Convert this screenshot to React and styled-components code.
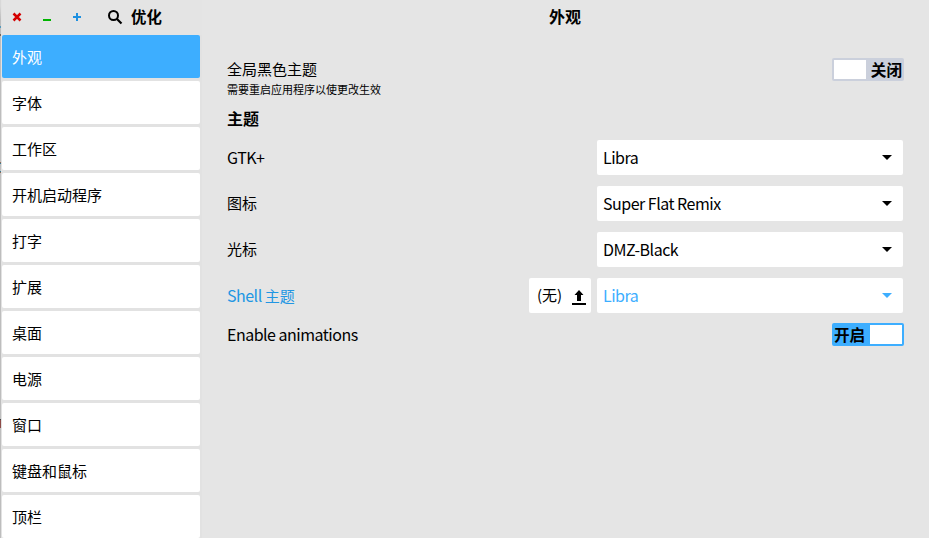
import React from "react";
import styled, { createGlobalStyle } from "styled-components";

const Global = createGlobalStyle`
  * { box-sizing: border-box; }
  body { margin: 0; background: #e5e5e5; }
  button { font: inherit; color: inherit; border: 0; padding: 0; margin: 0; background: none; }
`;
const Window = styled.div`
  width: 929px; height: 538px; overflow: hidden; display: grid;
  grid-template-columns: 1px 201px 1fr; background: #e5e5e5; color: #000;
  font: 16px/24px "Noto Sans CJK SC", sans-serif;
`;
const Edge = styled.div`
  background: linear-gradient(#d8d8d8 0 6px, #bdbdbd 20px 26px, #5599bb 26px 28px, #bdbdbd 28px 34px,
    #75665c 34px 36px, #bdbdbd 36px 162px, #93684f 162px 163px, #347b98 163px 164px, #bdbdbd 164px 171px,
    #347b98 171px 172px, #93684f 172px 173px, #bdbdbd 173px 419px, #444 419px 420px, #8d4b48 420px 428px, #bdbdbd 428px);
`;
const Sidebar = styled.aside`
  background: #e2e2e2; padding-left: 1px; overflow: hidden;
`;
const SideHeader = styled.header`
  height: 35px; display: flex; align-items: flex-start; background: #e4e4e4;
`;
const WindowButton = styled.button`
  width: 30px; height: 34px; display: flex; align-items: center; justify-content: center; color: ${p => p.$color};
`;
const SearchButton = styled.button`
  display: flex; margin: 10px 0 0 16px;
`;
const Title = styled.h1`
  margin: 0; font-size: 16px; font-weight: 700; line-height: 32px;
`;
const SideTitle = styled(Title)`margin-left: 7px; font-size: 15.4px;`;
const Nav = styled.nav`
  display: flex; flex-direction: column; gap: 3px; width: 198px;
`;
const NavItem = styled.button`
  height: 43px; flex: none; border-radius: 2px; text-align: left; padding: 0 0 0 10px; font-size: 15px;
  background: ${p => p.$active ? "#3daeff" : "#fff"}; color: ${p => p.$active ? "#fff" : "#000"};
`;
const Main = styled.main`background: #e5e5e5;`;
const MainHeader = styled.header`
  height: 35px; padding-right: 1px; text-align: center;
`;
const Settings = styled.section`
  padding: 23px 26px 0 25px;
`;
const Row = styled.div`
  display: flex; align-items: ${p => p.$top ? "flex-start" : "center"}; justify-content: space-between;
  height: ${p => p.$height}px; color: ${p => p.$blue ? "#2196e3" : "#000"};
`;
const Label = styled.div`font-size: 15px;`;
const TopLabel = styled(Label)`line-height: 22px;`;
const Latin = styled.span`font-size: 16px; letter-spacing: -0.5px;`;
const Hint = styled.div`font-size: 11px; line-height: 18px;`;
const Heading = styled.h2`margin: 0; font-size: 16px; line-height: 22px; height: 28px;`;
const Controls = styled.div`display: flex; gap: 6px;`;
const Select = styled.button`
  width: 306px; height: 35px; display: flex; justify-content: space-between; align-items: center;
  padding: 0 11px 0 6px; background: #fff; border-radius: 2px; letter-spacing: -0.5px;
  color: ${p => p.$blue ? "#3daeff" : "#000"};
`;
const FileButton = styled.button`
  width: 62px; height: 35px; display: flex; align-items: center; justify-content: space-between; padding: 0 5px 0 8px;
  background: #fff; border-radius: 2px; color: #000; font-size: 15px;
`;
const Switch = styled.button`
  width: 72px; height: 23px; display: flex; border: 2px solid ${p => p.$on ? "#3daeff" : "#cbd0dc"};
  flex-direction: ${p => p.$on ? "row-reverse" : "row"}; border-radius: 2px; margin-right: -1px;
  background: ${p => p.$on ? "#3daeff" : "#cbd0dc"}; font-size: 15.6px; font-weight: 700; line-height: 19px;
`;
const Knob = styled.span`width: 32px; height: 19px; background: #fff;`;
const SwitchText = styled.span`
  flex: 1; text-align: ${p => p.$on ? "left" : "right"};
`;
const Arrow = () => <svg width="10" height="5"><path d="M0 0H10L5 5Z" fill="currentColor" /></svg>;
const items = ["外观","字体","工作区","开机启动程序","打字","扩展","桌面","电源","窗口","键盘和鼠标","顶栏"];

export default function App() {
  return <><Global /><Window>
    <Edge />
    <Sidebar>
      <SideHeader>
        <WindowButton $color="#d40000"><svg width="10" height="10"><path d="M1.5 1.5L8.5 8.5M8.5 1.5L1.5 8.5" stroke="currentColor" strokeWidth="2.5" /></svg></WindowButton>
        <WindowButton $color="#00b400"><svg width="8" height="8"><path d="M0 7H8" stroke="currentColor" strokeWidth="2" /></svg></WindowButton>
        <WindowButton $color="#1e90e0"><svg width="8" height="8"><path d="M0 4H8M4 0V8" stroke="currentColor" strokeWidth="2" /></svg></WindowButton>
        <SearchButton><svg width="16" height="16"><circle cx="5.5" cy="5.5" r="4.5" fill="none" stroke="#000" strokeWidth="2" /><path d="M8.7 8.7L13.5 13.5" stroke="#000" strokeWidth="2.2" /></svg></SearchButton>
        <SideTitle>优化</SideTitle>
      </SideHeader>
      <Nav>{items.map((x, i) => <NavItem key={x} $active={i === 0}>{x}</NavItem>)}</Nav>
    </Sidebar>
    <Main>
      <MainHeader><Title>外观</Title></MainHeader>
      <Settings>
        <Row $height={49} $top><div><TopLabel>全局黑色主题</TopLabel><Hint>需要重启应用程序以使更改生效</Hint></div><Switch><Knob /><SwitchText>关闭</SwitchText></Switch></Row>
        <Heading>主题</Heading>
        <Row $height={44}><Label><Latin>GTK+</Latin></Label><Select>Libra<Arrow /></Select></Row>
        <Row $height={48}><Label>图标</Label><Select>Super Flat Remix<Arrow /></Select></Row>
        <Row $height={44}><Label>光标</Label><Select>DMZ-Black<Arrow /></Select></Row>
        <Row $height={48} $blue><Label><Latin>Shell </Latin>主题</Label><Controls><FileButton>(无)<svg width="14" height="19"><path d="M7 4L11.5 9H9V15H5V9H2.5ZM0 17H14V19H0Z" fill="#000" /></svg></FileButton><Select $blue>Libra<Arrow /></Select></Controls></Row>
        <Row $height={30}><Label><Latin>Enable animations</Latin></Label><Switch $on><Knob /><SwitchText $on>开启</SwitchText></Switch></Row>
      </Settings>
    </Main>
  </Window></>;
}
